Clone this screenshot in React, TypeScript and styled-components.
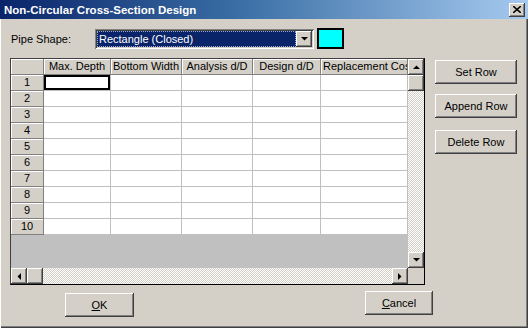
import * as React from "react"
import styled, { createGlobalStyle } from "styled-components"

const FACE = "#d4d0c8"

const raised = `
  box-shadow: inset -1px -1px #404040, inset 1px 1px #ffffff,
    inset -2px -2px #808080, inset 2px 2px ${FACE};
`
const sunken = `
  box-shadow: inset 1px 1px #808080, inset -1px -1px #ffffff,
    inset 2px 2px #404040, inset -2px -2px ${FACE};
`

const GlobalStyle = createGlobalStyle`
  html, body {
    margin: 0;
    padding: 0;
    background: ${FACE};
  }
  body {
    font-family: "Liberation Sans", Arial, sans-serif;
    font-size: 11px;
    color: #000;
  }
`

const Window = styled.div`
  width: 528px;
  height: 328px;
  box-sizing: border-box;
  background: ${FACE};
  display: flex;
  flex-direction: column;
  box-shadow: inset 1px 0 #ffffff, inset -1px -1px #404040, inset -2px -2px #808080;
  overflow: hidden;
`
const TitleBar = styled.div`
  height: 19px;
  flex: none;
  display: flex;
  align-items: center;
  justify-content: space-between;
  padding: 0 3px 0 4px;
  background: linear-gradient(90deg, #0a246a 0%, #3a6ea5 45%, #a6caf0 100%);
  color: #fff;
  font-weight: bold;
  font-size: 11.5px;
`
const CloseButton = styled.div`
  width: 16px;
  height: 14px;
  background: ${FACE};
  ${raised}
  display: flex;
  align-items: center;
  justify-content: center;
`
const Body = styled.div`
  padding: 9px 10px 0 10px;
  display: flex;
  flex-direction: column;
`
const TopRow = styled.div`
  display: flex;
  align-items: center;
  height: 21px;
`
const Label = styled.div`
  width: 85px;
  padding-left: 1px;
  box-sizing: border-box;
`
const Combo = styled.div`
  width: 219px;
  height: 20px;
  box-sizing: border-box;
  padding: 2px;
  background: #fff;
  ${sunken}
  display: flex;
`
const ComboValue = styled.div`
  flex: 1;
  background: #0a246a;
  color: #fff;
  line-height: 16px;
  padding-left: 2px;
  outline: 1px dotted #9aa8d0;
  outline-offset: -1px;
  white-space: nowrap;
`
const ArrowButton = styled.div`
  width: 16px;
  height: 16px;
  flex: none;
  background: ${FACE};
  ${raised}
  display: flex;
  align-items: center;
  justify-content: center;
`
const Swatch = styled.div<{ $color: string }>`
  margin-left: 3px;
  width: 27px;
  height: 21px;
  box-sizing: border-box;
  border: 2px solid #000;
  background: ${p => p.$color};
`
const MainRow = styled.div`
  display: flex;
  align-items: flex-start;
  margin-top: 9px;
`
const GridFrame = styled.div`
  width: 415px;
  height: 227px;
  box-sizing: border-box;
  border: 1px solid #000;
  border-top-color: #404040;
  border-left-color: #404040;
  background: #c0c0c0;
  display: flex;
  flex-direction: column;
`
const GridUpper = styled.div`
  display: flex;
  height: 209px;
`
const Table = styled.div`
  width: 397px;
  display: grid;
  grid-template-columns: 33px 67px 71px 71px 68px 87px;
  grid-auto-rows: 16px;
  align-content: start;
  background: #c0c0c0;
  overflow: hidden;
`
const HeaderCell = styled.div`
  background: ${FACE};
  box-sizing: border-box;
  border-right: 1px solid #808080;
  border-bottom: 1px solid #808080;
  box-shadow: inset 1px 1px #ffffff;
  line-height: 15px;
  text-align: center;
  white-space: nowrap;
  overflow: hidden;
  padding: 0 2px;
`
const DataCell = styled.div<{ $selected?: boolean }>`
  background: #fff;
  box-sizing: border-box;
  border-right: 1px solid #c0c0c0;
  border-bottom: 1px solid #c0c0c0;
  ${p => (p.$selected ? "box-shadow: inset 0 0 0 2px #000;" : "")}
`
const VScroll = styled.div`
  width: 16px;
  display: flex;
  flex-direction: column;
`
const HScroll = styled.div`
  height: 16px;
  display: flex;
`
const Track = styled.div`
  flex: 1;
  background: repeating-conic-gradient(#ffffff 0 25%, ${FACE} 0 50%) 0 0 / 2px 2px;
`
const Thumb = styled.div`
  width: 16px;
  height: 16px;
  flex: none;
  background: ${FACE};
  ${raised}
`
const Corner = styled.div`
  width: 16px;
  height: 16px;
  background: ${FACE};
`
const ButtonColumn = styled.div`
  margin-left: 10px;
  padding-top: 2px;
  display: flex;
  flex-direction: column;
`
const Button = styled.button<{ $width?: number; $top?: number; $left?: number }>`
  width: ${p => p.$width ?? 82}px;
  height: 24px;
  margin-top: ${p => p.$top ?? 0}px;
  margin-left: ${p => p.$left ?? 0}px;
  padding: 0;
  border: none;
  background: ${FACE};
  ${raised}
  font-family: inherit;
  font-size: 11px;
  color: #000;
`
const Footer = styled.div`
  display: flex;
  align-items: flex-start;
  margin-top: 7px;
`

type Dir = "up" | "down" | "left" | "right"
const Arrow: React.FC<{ dir: Dir }> = ({ dir }) => {
  const pts: Record<Dir, string> = {
    up: "0,4 7,4 3.5,0.5",
    down: "0,0 7,0 3.5,3.5",
    left: "4,0 4,7 0.5,3.5",
    right: "0,0 0,7 3.5,3.5",
  }
  const vertical = dir === "up" || dir === "down"
  return (
    <svg width={vertical ? 7 : 4} height={vertical ? 4 : 7}>
      <polygon points={pts[dir]} fill="#000" />
    </svg>
  )
}

const columns = ["Max. Depth", "Bottom Width", "Analysis d/D", "Design d/D", "Replacement Cost"]
const rows = [1, 2, 3, 4, 5, 6, 7, 8, 9, 10]

export default function App() {
  return (
    <>
      <GlobalStyle />
      <Window>
        <TitleBar>
          <span>Non-Circular Cross-Section Design</span>
          <CloseButton>
            <svg width="8" height="7">
              <path d="M0 0 L8 7 M8 0 L0 7" stroke="#000" strokeWidth="1.6" />
            </svg>
          </CloseButton>
        </TitleBar>
        <Body>
          <TopRow>
            <Label>Pipe Shape:</Label>
            <Combo>
              <ComboValue>Rectangle (Closed)</ComboValue>
              <ArrowButton>
                <Arrow dir="down" />
              </ArrowButton>
            </Combo>
            <Swatch $color="#00ffff" />
          </TopRow>
          <MainRow>
            <GridFrame>
              <GridUpper>
                <Table>
                  <HeaderCell />
                  {columns.map(c => (
                    <HeaderCell key={c}>{c}</HeaderCell>
                  ))}
                  {rows.map(r => (
                    <React.Fragment key={r}>
                      <HeaderCell>{r}</HeaderCell>
                      {columns.map((c, i) => (
                        <DataCell key={c} $selected={r === 1 && i === 0} />
                      ))}
                    </React.Fragment>
                  ))}
                </Table>
                <VScroll>
                  <ArrowButton>
                    <Arrow dir="up" />
                  </ArrowButton>
                  <Thumb />
                  <Track />
                  <ArrowButton>
                    <Arrow dir="down" />
                  </ArrowButton>
                </VScroll>
              </GridUpper>
              <HScroll>
                <ArrowButton>
                  <Arrow dir="left" />
                </ArrowButton>
                <Thumb />
                <Track />
                <ArrowButton>
                  <Arrow dir="right" />
                </ArrowButton>
                <Corner />
              </HScroll>
            </GridFrame>
            <ButtonColumn>
              <Button>Set Row</Button>
              <Button $top={10}>Append Row</Button>
              <Button $top={12}>Delete Row</Button>
            </ButtonColumn>
          </MainRow>
          <Footer>
            <Button $width={69} $left={55} $top={1}>
              <u>O</u>K
            </Button>
            <Button $width={68} $left={231} $top={-1}>
              <u>C</u>ancel
            </Button>
          </Footer>
        </Body>
      </Window>
    </>
  )
}
